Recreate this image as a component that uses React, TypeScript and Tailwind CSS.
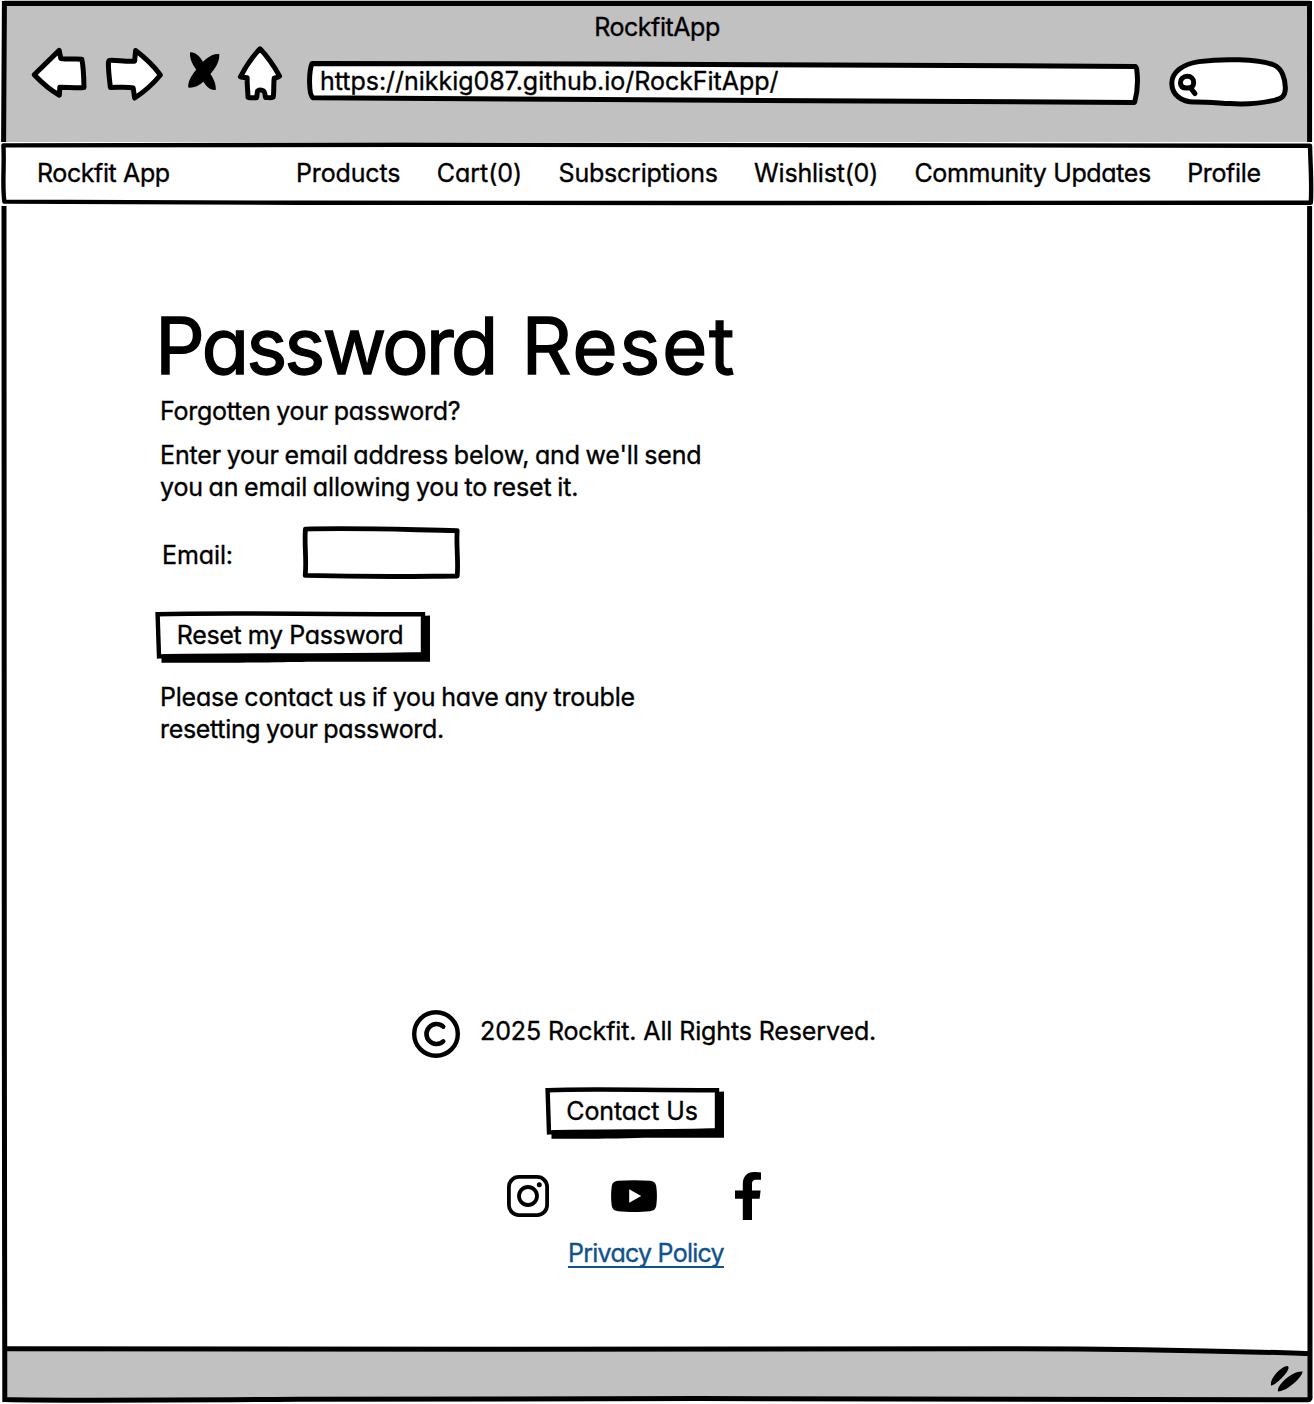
import type { ReactNode } from "react";

const NAV_LINKS = [
  { label: "Products", tracking: "tracking-[-0.15px]" },
  { label: "Cart(0)", tracking: "tracking-normal" },
  { label: "Subscriptions", tracking: "tracking-[-0.22px]" },
  { label: "Wishlist(0)", tracking: "tracking-[-0.2px]" },
  { label: "Community Updates", tracking: "tracking-[-0.37px]" },
  { label: "Profile", tracking: "tracking-[-0.35px]" },
];

/* Hand-drawn window outline, split where the nav bar crosses it. */
function WindowFrame() {
  return (
    <svg
      className="pointer-events-none absolute inset-0"
      width="1314"
      height="1404"
      viewBox="0 0 1314 1404"
      fill="none"
      stroke="#000"
      strokeWidth="5"
    >
      <path d="M3.6 142 L4.4 3.5 L110 3.4 L1309.5 3.4 L1309.6 142" />
      <path d="M4 206 L4.3 1000 L4.8 1399.5 C60 1401 130 1400.5 300 1399.3 L700 1398.6 L1308 1399.8 C1309.8 1399.8 1310.3 1398 1310 1396 L1309.6 206" />
      <path d="M4 1348.8 C60 1350.2 200 1350.3 500 1349.3 L1000 1348.7 C1150 1348.8 1240 1351.5 1308 1353.4" />
    </svg>
  );
}

function BackIcon() {
  return (
    <svg className="absolute left-[26px] top-[45px]" width="60" height="56" viewBox="30 45 60 56" fill="#fff" stroke="#000" strokeWidth="5" strokeLinejoin="round">
      <path d="M34.2 74.8 L59.2 50.4 L60.8 58.6 C67 59.6 74 58.8 81.8 59.2 C83.6 67 83.8 77 84 87.6 C76 88.2 68 87.2 59.8 87.2 L59.4 95.2 C50 90 42 83 34.2 74.8 Z" />
    </svg>
  );
}

function ForwardIcon() {
  return (
    <svg className="absolute left-[100px] top-[45px]" width="61" height="58" viewBox="104 45 61 58" fill="#fff" stroke="#000" strokeWidth="5" strokeLinejoin="round">
      <path d="M109.6 60.4 C116 60 126 61.8 134.6 61.2 L135.6 50.6 C144 57 153 65 160.4 75 C153 84 144 92 134.6 98 L133.2 88 C127 86.4 119 87.4 110.4 87.4 C109.4 79 108.2 70 108.4 62.6 C108.5 61.2 108.8 60.6 109.6 60.4 Z" />
    </svg>
  );
}

function StopIcon() {
  return (
    <svg className="absolute left-[182px] top-[50px]" width="36" height="42" viewBox="186 50 36 42" fill="#000">
      <path d="M190 52.2 C196.6 52 201.4 57.6 204.8 65.6 C208.4 72.4 216.6 79.6 215.8 90 C208.4 90.4 204.4 84.4 200.6 76.6 C197 69.4 189.2 62.6 190 52.2 Z" />
      <path d="M219.3 54 C219.8 62 215 69 209.4 75 C205 80.4 198.4 88.6 188.2 87.6 C187.8 80.6 192.6 73.4 198 67.8 C202.4 62 209.6 53.4 219.3 54 Z" />
    </svg>
  );
}

function HomeIcon() {
  return (
    <svg className="absolute left-[231px] top-[43px]" width="50" height="60" viewBox="235 43 50 60" fill="#fff" stroke="#000" strokeWidth="5" strokeLinejoin="round">
      <path d="M260 48.8 C267 56 274 66 279.6 76.2 C278 78 276 77.6 274.2 78.2 C273.4 84 274.2 91 273.2 97 C271 98.2 268.6 97.4 265.6 97.6 C265 94 264.4 90.6 262.4 90.4 C260.6 89.8 259 90 257.6 91 C257 93 257.2 95 256.6 97.8 C253.6 97.6 251 98.2 248 97.4 C248 91 246.8 84 247.2 77.8 C245 77.4 242.4 77.8 240.4 76.8 C246 66 252 57 260 48.8 Z" />
    </svg>
  );
}

function AddressBar({ url }: { url: string }) {
  return (
    <div className="relative ml-[306px] flex h-[46px] w-[835px] items-center pl-[14px]">
      <svg className="absolute inset-0" width="835" height="46" viewBox="306 60 835 46" fill="#fff" stroke="#000" strokeWidth="5" strokeLinejoin="round">
        <path d="M312 63.5 L600 63.9 C800 64.4 1000 66 1135 66.4 C1136 66.6 1136.6 68 1136.8 70 C1138 80 1137.6 92 1134.6 102.4 C1000 102.6 800 101.6 600 99.6 C500 98.6 400 98 313 97.8 C308.6 95 308.6 72 312 63.5 Z" />
      </svg>
      <span className="relative -mt-[5px] leading-8 tracking-[-0.03px]">{url}</span>
    </div>
  );
}

function SearchBox() {
  return (
    <svg className="ml-[26px] mt-[-6px]" width="124" height="54" viewBox="1167 54 124 54" fill="#fff" stroke="#000" strokeWidth="5" strokeLinecap="round" strokeLinejoin="round">
      <path d="M1194 102 C1182 102 1171.6 95 1171.8 83 C1172 72 1183 64 1199 61.6 C1222 58.6 1258 58.8 1274 65 C1282 68.4 1285.4 79 1285.4 88 C1285.2 96 1282 98.4 1276 99.8 C1262 103.4 1248 104.6 1230 103.6 C1218 103 1206 101.8 1194 102 Z" />
      <path d="M1187.4 76.3 C1183 76.3 1180.3 79.4 1180.4 83 C1180.6 86.8 1183.6 88.2 1187.6 88 C1191.6 88 1193.8 86 1193.7 82.4 C1193.6 78.8 1191 76.3 1187.4 76.3 Z M1190.6 88 L1195 93.6" strokeWidth="5" />
    </svg>
  );
}

function SketchButton({ width, children }: { width: number; children: ReactNode }) {
  const w = width;
  return (
    <button className="relative flex h-[52px] items-center justify-center pb-[4px] pr-[6px]" style={{ width: w }}>
      <svg className="absolute inset-0" width={w} height="52" viewBox={`0 0 ${w} 52`}>
        <path d={`M6.5 42 L${w - 11} 5 L${w - 1} 4.6 L${w - 1} 50.8 L${w * 0.55} 50.8 C${w * 0.4} 51.8 ${w * 0.15} 52 6.5 51.8 Z`} fill="#000" />
        <path d={`M2.6 3.2 C${w * 0.2} 1.6 ${w * 0.4} 2.8 ${w - 8} 3.2 L${w - 8} 43.2 C${w * 0.7} 45.2 ${w * 0.3} 43.8 4 45.4 Z`} fill="#fff" stroke="#000" strokeWidth="4.4" />
      </svg>
      <span className="relative whitespace-nowrap leading-8">{children}</span>
    </button>
  );
}

function CopyrightIcon() {
  return (
    <svg width="48" height="48" viewBox="0 0 48 48" fill="none" stroke="#000" strokeLinecap="round">
      <circle cx="24" cy="24" r="21.8" strokeWidth="4.4" />
      <path d="M31.2 16.6 A10 10 0 1 0 31.2 31.4" strokeWidth="4.6" />
    </svg>
  );
}

function InstagramIcon() {
  return (
    <svg width="42" height="42" viewBox="0 0 42 42" fill="none" stroke="#000">
      <rect x="1.9" y="1.9" width="38.2" height="38.2" rx="10" strokeWidth="3.8" />
      <circle cx="21" cy="21" r="9" strokeWidth="3.8" />
      <circle cx="32.3" cy="9.8" r="2.5" fill="#000" stroke="none" />
    </svg>
  );
}

function YoutubeIcon() {
  return (
    <svg width="46" height="32" viewBox="0 0 46 32">
      <path d="M7 .8 C17 -.1 29 -.1 39 .8 C43.4 1.2 45 3.4 45.4 7.4 C46.1 13 46.1 19 45.4 24.6 C45 28.6 43.4 30.8 39 31.2 C29 32.1 17 32.1 7 31.2 C2.6 30.8 1 28.6 .6 24.6 C-.1 19 -.1 13 .6 7.4 C1 3.4 2.6 1.2 7 .8 Z" />
      <path d="M18.2 9.2 L30.2 16 L18.2 22.8 Z" fill="#fff" />
    </svg>
  );
}

function FacebookIcon() {
  return (
    <svg width="26" height="48" viewBox="0 0 26 48">
      <path d="M7.8 48 V26.8 H0 V18.6 H7.8 V12 C7.8 4.6 12 0 19 0 C22 0 24.6 .2 26 .5 V7.8 H21.4 C18 7.8 17 9.4 17 12.2 V18.6 H25.6 L24.6 26.8 H17 V48 Z" />
    </svg>
  );
}

export default function App() {
  return (
    <div className="relative flex h-[1404px] w-[1314px] flex-col overflow-hidden bg-white font-[Inter,sans-serif] text-[25px] leading-8 text-black [-webkit-text-stroke:0.35px] [font-feature-settings:'cv11']">
      <header className="relative mx-1 h-[142px] bg-[#c1c1c1]">
        <div className="-ml-1 w-[1314px]">
          <h2 className="pt-[11px] text-center tracking-[-0.45px]">RockfitApp</h2>
          <BackIcon />
          <ForwardIcon />
          <StopIcon />
          <HomeIcon />
          <div className="mt-[17px] flex">
            <AddressBar url="https://nikkig087.github.io/RockFitApp/" />
            <SearchBox />
          </div>
        </div>
      </header>

      <nav className="relative z-10 flex h-[64px] items-center pb-[2px] pl-[37px]">
        <svg className="absolute left-0 top-0" width="1314" height="64" viewBox="0 142 1314 64" fill="#fff" stroke="#000" strokeWidth="4.4" strokeLinejoin="round">
          <path d="M3.4 145.4 L400 144.8 L900 145.2 L1310 145.8 C1310.4 165 1312 185 1310.8 202.8 L700 203 L300 202.8 L4.4 201.6 C2 185 4.6 165 3.4 145.4 Z" />
        </svg>
        <span className="relative w-[259px] tracking-[-0.4px]">Rockfit App</span>
        <ul className="relative flex gap-[36.4px] whitespace-nowrap">
          {NAV_LINKS.map((link) => (
            <li key={link.label} className={link.tracking}>
              {link.label}
            </li>
          ))}
        </ul>
      </nav>

      <main className="ml-[160px] flex h-[804px] w-[620px] flex-col items-start pt-[100px]">
        <h1 className="-ml-[5px] flex gap-[26px] whitespace-nowrap text-[78px] font-normal leading-[80px] [-webkit-text-stroke:1.3px]">
          <span className="tracking-[-3px]">Password</span>
          <span className="tracking-[1.6px]">Reset</span>
        </h1>
        <p className="mt-[9px] tracking-[-0.27px] [word-spacing:-1px]">Forgotten your password?</p>
        <p className="mt-3 tracking-[-0.15px] [word-spacing:-1.2px]">
          Enter your email address below, and we'll send
          <br />
          you an email allowing you to reset it.
        </p>
        <div className="mt-[22px] flex h-[54px] items-center">
          <span className="w-[141px] pl-[2px] pt-[5px] tracking-[-0.1px]">Email:</span>
          <svg width="160" height="54" viewBox="0 0 160 54" fill="#fff" stroke="#000" strokeWidth="4.8" strokeLinejoin="round">
            <path d="M4.4 4.2 C50 2.6 100 4.6 156.2 5.6 C155 20 157.6 36 156.2 51 C110 51.4 80 52.4 4.2 50.4 C5.8 35 3.2 20 4.4 4.2 Z" />
          </svg>
        </div>
        <div className="-ml-[5px] mt-[32px] tracking-[-0.38px]">
          <SketchButton width={276}>Reset my Password</SketchButton>
        </div>
        <p className="mt-[18px] tracking-[-0.2px] [word-spacing:-1px]">
          Please contact us if you have any trouble
          <br />
          <span className="tracking-[-0.32px]">resetting your password.</span>
        </p>
      </main>

      <footer className="flex h-[341px] flex-col pl-[412px]">
        <div className="flex items-start gap-[20px]">
          <CopyrightIcon />
          <span className="mt-[5px] tracking-[-0.12px]">2025 Rockfit. All Rights Reserved.</span>
        </div>
        <div className="ml-[133px] mt-[29px] tracking-[-0.1px]">
          <SketchButton width={180}>Contact Us</SketchButton>
        </div>
        <div className="ml-[95px] mt-[33px] flex h-[48px] items-center">
          <InstagramIcon />
          <span className="ml-[62px]">
            <YoutubeIcon />
          </span>
          <span className="ml-[78px]">
            <FacebookIcon />
          </span>
        </div>
        <a
          href="#privacy"
          className="ml-[156px] mt-[17px] h-[31px] self-start border-b-2 border-[#0e528e] tracking-[-0.75px] text-[#0e528e]"
        >
          Privacy Policy
        </a>
      </footer>

      <div className="mx-1 mb-1 flex flex-1 items-end justify-end bg-[#c1c1c1] pb-[5px] pr-[6px]">
        <svg width="36" height="32" viewBox="1268 1363 36 32">
          <path d="M1271 1385.4 C1269.6 1379 1281 1366 1287.6 1366 C1290.6 1368 1286 1374 1281.6 1378.2 C1277.4 1382 1273 1386 1271 1385.4 Z" />
          <path d="M1278 1391.6 C1276 1385.6 1292.4 1370.6 1302.6 1371.6 C1302.4 1377 1287 1391.6 1278 1391.6 Z" />
        </svg>
      </div>
      <WindowFrame />
    </div>
  );
}
